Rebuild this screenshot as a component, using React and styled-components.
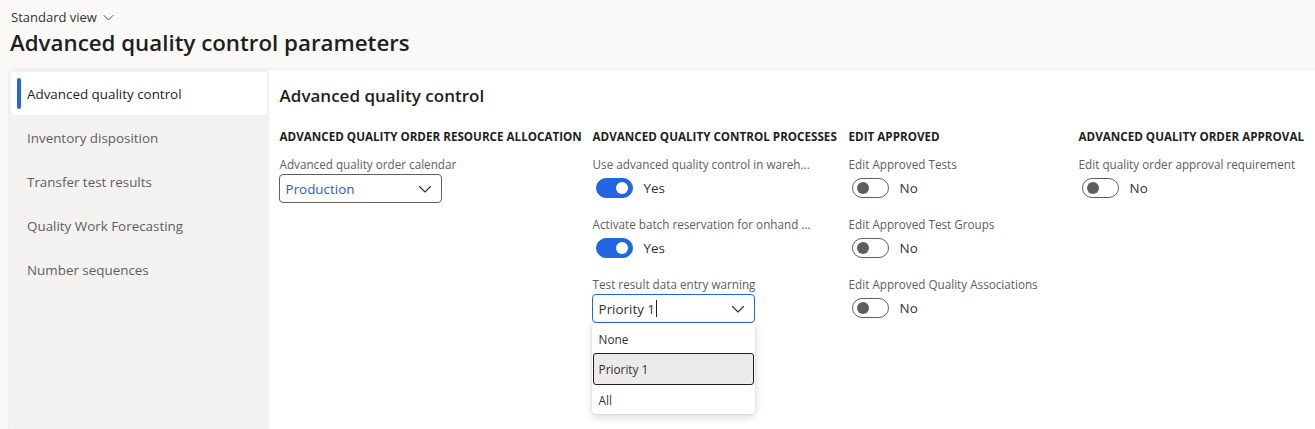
import React from 'react';
import styled, { createGlobalStyle } from 'styled-components';

const GlobalStyle = createGlobalStyle`
  html, body {
    margin: 0;
    padding: 0;
    background: #faf9f8;
    font-family: 'Open Sans', 'Noto Sans', sans-serif;
    color: #323130;
  }
  * { box-sizing: border-box; }
`;

const Page = styled.div`
  height: 429px;
  display: flex;
  flex-direction: column;
  overflow: hidden;
`;

const Header = styled.div`
  height: 70px;
  padding: 5px 10px 0;
  flex-shrink: 0;
`;

const ViewPicker = styled.div`
  display: inline-flex;
  align-items: center;
  gap: 5px;
  font-size: 13px;
  line-height: 20px;
  color: #323130;
  padding-left: 1px;
`;

const Title = styled.h1`
  margin: 0;
  font-size: 22.3px;
  line-height: 32px;
  font-weight: 600;
  color: #201f1e;
`;

const Body = styled.div`
  flex: 1;
  display: flex;
  margin-left: 9px;
  border-radius: 6px 0 0 0;
  box-shadow: 0 0 3px rgba(0, 0, 0, 0.12);
  overflow: hidden;
`;

const Nav = styled.nav`
  width: 260px;
  background: #f3f2f1;
  padding: 2px;
  display: flex;
  flex-direction: column;
  gap: 1px;
`;

const NavItem = styled.div`
  position: relative;
  height: 43px;
  display: flex;
  align-items: center;
  padding-left: 16px;
  font-size: 13.4px;
  color: ${(p) => (p.$active ? '#201f1e' : '#605e5c')};
  background: ${(p) => (p.$active ? '#ffffff' : 'transparent')};
  border-radius: 4px;

  &::before {
    content: '';
    display: ${(p) => (p.$active ? 'block' : 'none')};
    position: absolute;
    left: 6px;
    top: 6px;
    bottom: 6px;
    width: 4px;
    border-radius: 2px;
    background: #2266e3;
  }
`;

const Content = styled.main`
  flex: 1;
  background: #ffffff;
  padding: 14px 11px;
`;

const SectionTitle = styled.h2`
  margin: 0 0 21px;
  font-size: 17px;
  line-height: 24px;
  font-weight: 600;
  color: #201f1e;
`;

const Columns = styled.div`
  display: grid;
  grid-template-columns: 313px 256px 230px 1fr;
`;

const Group = styled.div`
  display: flex;
  flex-direction: column;
`;

const GroupHeader = styled.div`
  font-size: 11.65px;
  line-height: 16px;
  font-weight: 700;
  text-transform: uppercase;
  color: #201f1e;
  margin-bottom: 9px;
  white-space: nowrap;
`;

const Field = styled.div`
  position: relative;
  display: flex;
  flex-direction: column;
  margin-bottom: 12px;
`;

const Label = styled.div`
  font-size: 11.7px;
  line-height: 20px;
  color: #605e5c;
  white-space: nowrap;
`;

const ToggleRow = styled.div`
  height: 28px;
  display: flex;
  align-items: center;
  gap: 11px;
  padding-left: 3px;
  font-size: 13.4px;
  color: #323130;
`;

const Track = styled.div`
  width: 37px;
  height: 20px;
  border-radius: 10px;
  padding: 0 4px;
  display: flex;
  align-items: center;
  justify-content: ${(p) => (p.$on ? 'flex-end' : 'flex-start')};
  background: ${(p) => (p.$on ? '#2266e3' : '#ffffff')};
  border: 1px solid ${(p) => (p.$on ? '#2266e3' : '#605e5c')};
`;

const Knob = styled.div`
  width: 12px;
  height: 12px;
  border-radius: 50%;
  background: ${(p) => (p.$on ? '#ffffff' : '#605e5c')};
`;

const Combo = styled.div`
  width: 163px;
  height: 29px;
  margin-left: -1px;
  display: flex;
  align-items: center;
  justify-content: space-between;
  padding: 0 8px 0 6px;
  border: 1px solid ${(p) => (p.$focused ? '#2266e3' : '#605e5c')};
  border-radius: 4px;
  font-size: 13.4px;
  color: ${(p) => (p.$link ? '#2f57d6' : '#323130')};
  background: #ffffff;
`;

const Caret = styled.span`
  display: inline-block;
  width: 1px;
  height: 17px;
  margin-left: 1px;
  vertical-align: -3px;
  background: #201f1e;
`;

const Menu = styled.div`
  position: absolute;
  top: 49px;
  left: -1px;
  width: 163px;
  background: #ffffff;
  border-radius: 4px;
  box-shadow: 0 3px 8px rgba(0, 0, 0, 0.16), 0 0 2px rgba(0, 0, 0, 0.12);
  padding: 1px 1px 0;
  z-index: 2;
`;

const Option = styled.div`
  height: ${(p) => (p.$selected ? '32px' : '29px')};
  display: flex;
  align-items: center;
  padding-left: 5px;
  font-size: 11.8px;
  color: #323130;
  background: ${(p) => (p.$selected ? '#edebe9' : 'transparent')};
  border: ${(p) => (p.$selected ? '1px solid #201f1e' : '1px solid transparent')};
  border-radius: 3px;
`;

const Chevron = ({ size = 12 }) => (
  <svg width={size} height={size} viewBox="0 0 16 16" fill="none">
    <path d="M2.5 5.5 8 11l5.5-5.5" stroke="#323130" strokeWidth="1.1" strokeLinecap="round" strokeLinejoin="round" />
  </svg>
);

const Toggle = ({ on }) => (
  <ToggleRow>
    <Track $on={on}>
      <Knob $on={on} />
    </Track>
    {on ? 'Yes' : 'No'}
  </ToggleRow>
);

const navItems = [
  'Advanced quality control',
  'Inventory disposition',
  'Transfer test results',
  'Quality Work Forecasting',
  'Number sequences',
];

export default function App() {
  return (
    <Page>
      <GlobalStyle />
      <Header>
        <ViewPicker>
          Standard view <Chevron size={13} />
        </ViewPicker>
        <Title>Advanced quality control parameters</Title>
      </Header>
      <Body>
        <Nav>
          {navItems.map((item, i) => (
            <NavItem key={item} $active={i === 0}>
              {item}
            </NavItem>
          ))}
        </Nav>
        <Content>
          <SectionTitle>Advanced quality control</SectionTitle>
          <Columns>
            <Group>
              <GroupHeader>Advanced quality order resource allocation</GroupHeader>
              <Field>
                <Label>Advanced quality order calendar</Label>
                <Combo $link>
                  Production
                  <Chevron size={16} />
                </Combo>
              </Field>
            </Group>
            <Group>
              <GroupHeader>Advanced quality control processes</GroupHeader>
              <Field>
                <Label>Use advanced quality control in wareh...</Label>
                <Toggle on />
              </Field>
              <Field>
                <Label>Activate batch reservation for onhand ...</Label>
                <Toggle on />
              </Field>
              <Field>
                <Label>Test result data entry warning</Label>
                <Combo $focused>
                  <span>
                    Priority 1<Caret />
                  </span>
                  <Chevron size={16} />
                </Combo>
                <Menu>
                  <Option>None</Option>
                  <Option $selected>Priority 1</Option>
                  <Option>All</Option>
                </Menu>
              </Field>
            </Group>
            <Group>
              <GroupHeader>Edit approved</GroupHeader>
              <Field>
                <Label>Edit Approved Tests</Label>
                <Toggle />
              </Field>
              <Field>
                <Label>Edit Approved Test Groups</Label>
                <Toggle />
              </Field>
              <Field>
                <Label>Edit Approved Quality Associations</Label>
                <Toggle />
              </Field>
            </Group>
            <Group>
              <GroupHeader>Advanced quality order approval</GroupHeader>
              <Field>
                <Label>Edit quality order approval requirement</Label>
                <Toggle />
              </Field>
            </Group>
          </Columns>
        </Content>
      </Body>
    </Page>
  );
}
